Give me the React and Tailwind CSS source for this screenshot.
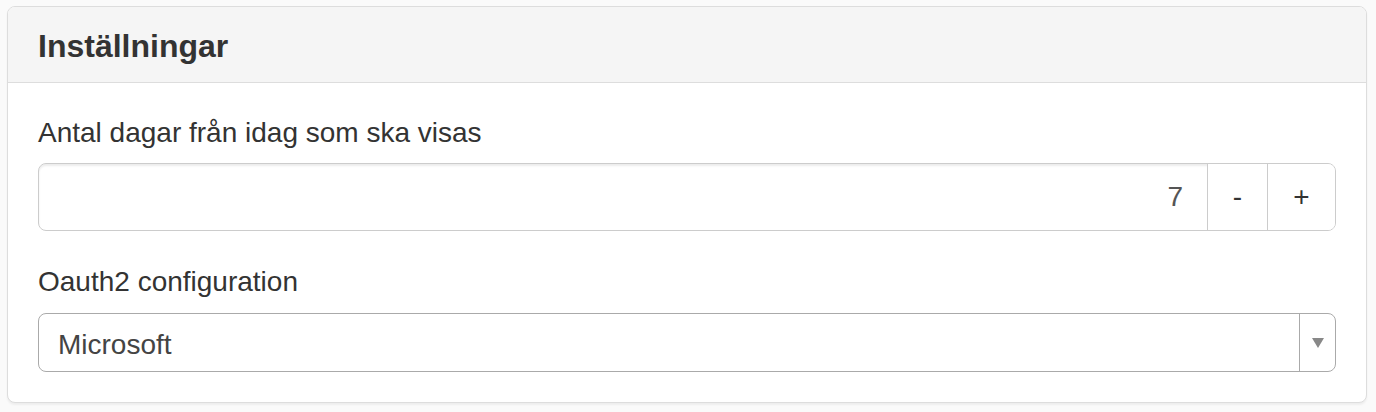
import React, { useState } from 'react';

const font = { fontFamily: '"Liberation Sans", Arial, sans-serif' };

const App = () => {
    const [days, setDays] = useState(7);

    return (
        <div className="min-h-[412px] bg-[#fafafa] pt-[6px] pl-[7px] pr-[9px] text-[#333]" style={font}>
            <div className="bg-white border border-[#ddd] rounded-[8px] shadow-[0_2px_2px_rgba(0,0,0,0.05)] overflow-hidden">
                <div className="bg-[#f5f5f5] border-b border-[#ddd] px-[30px] pt-[22px] pb-[18px]">
                    <h3 className="text-[32px] leading-[35px] font-bold text-[#333]">Inställningar</h3>
                </div>

                <div className="px-[30px] pt-[30px] pb-[30px]">
                    <div className="mb-[31px]">
                        <label className="block text-[28px] leading-[40px] mb-[10px]">Antal dagar från idag som ska visas</label>
                        <div className="flex h-[68px] border border-[#ccc] rounded-[8px] overflow-hidden shadow-[inset_0_2px_2px_rgba(0,0,0,0.075)]">
                            <input
                                type="text"
                                value={days}
                                readOnly
                                className="flex-1 min-w-0 px-[24px] text-right text-[28px] text-[#555] bg-transparent outline-none"
                            />
                            <button
                                onClick={() => setDays(days - 1)}
                                className="w-[60px] border-l border-[#ccc] bg-white text-[28px] text-[#333]"
                            >
                                -
                            </button>
                            <button
                                onClick={() => setDays(days + 1)}
                                className="w-[68px] border-l border-[#ccc] bg-white text-[28px] text-[#333]"
                            >
                                +
                            </button>
                        </div>
                    </div>

                    <div>
                        <label className="block text-[28px] leading-[40px] mb-[11px]">Oauth2 configuration</label>
                        <div className="flex h-[59px] border border-[#aaa] rounded-[8px] bg-white">
                            <div className="flex-1 flex items-center pl-[19px] pt-[4px] text-[28px] text-[#444]">Microsoft</div>
                            <div className="w-[36px] border-l border-[#aaa] flex items-center justify-center">
                                <svg width="12" height="10" viewBox="0 0 12 10">
                                    <polygon points="0,0 12,0 6,10" fill="#888" />
                                </svg>
                            </div>
                        </div>
                    </div>
                </div>
            </div>
        </div>
    );
};

export default App;
